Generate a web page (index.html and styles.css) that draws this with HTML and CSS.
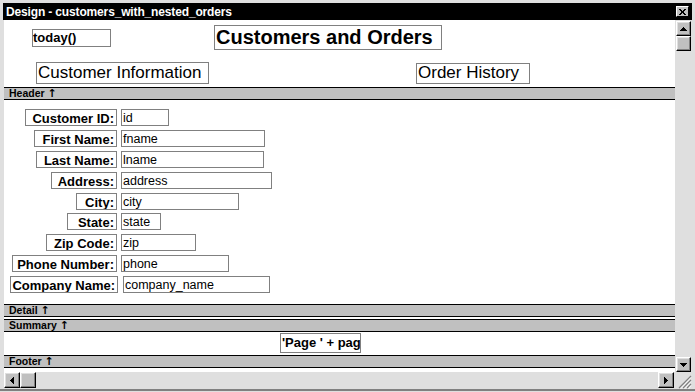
FILE: index.html
```html
<!DOCTYPE html>
<html>
<head>
<meta charset="utf-8">
<title>Design - customers_with_nested_orders</title>
<link rel="stylesheet" href="styles.css">
</head>
<body>
<div class="window">
  <div class="titlebar">
    <span class="title">Design - customers_with_nested_orders</span>
    <span class="close"><svg width="7" height="6" viewBox="0 0 7 6"><path d="M0 0h2v1h1v1h1V1h1V0h2v1H6v1H5v2h1v1h1v1H5V5H4V4H3v1H2v1H0V5h1V4h1V2H1V1H0z" fill="#000"/></svg></span>
  </div>
  <div class="client">
    <div class="canvas">
      <div class="area area-header">
        <div class="hrow hrow-1">
          <div class="ctl ctl-today">today()</div>
          <div class="ctl ctl-title">Customers and Orders</div>
        </div>
        <div class="hrow hrow-2">
          <div class="ctl ctl-custinfo">Customer Information</div>
          <div class="ctl ctl-orders">Order History</div>
        </div>
      </div>
      <div class="band">Header <span class="arrow">↑</span></div>
      <div class="area area-detail">
        <div class="fields">
          <div class="lbl w-custid">Customer ID:</div><div class="fld f-id">id</div>
          <div class="lbl w-fname">First Name:</div><div class="fld f-fname">fname</div>
          <div class="lbl w-lname">Last Name:</div><div class="fld f-lname">lname</div>
          <div class="lbl w-address">Address:</div><div class="fld f-address">address</div>
          <div class="lbl w-city">City:</div><div class="fld f-city">city</div>
          <div class="lbl w-state">State:</div><div class="fld f-state">state</div>
          <div class="lbl w-zip">Zip Code:</div><div class="fld f-zip">zip</div>
          <div class="lbl w-phone">Phone Number:</div><div class="fld f-phone">phone</div>
          <div class="lbl w-company">Company Name:</div><div class="fld f-company">company_name</div>
        </div>
      </div>
      <div class="band">Detail <span class="arrow">↑</span></div>
      <div class="area area-summary"></div>
      <div class="band">Summary <span class="arrow">↑</span></div>
      <div class="area area-footer">
        <div class="ctl ctl-page">'Page ' + pag</div>
      </div>
      <div class="band">Footer <span class="arrow">↑</span></div>
    </div>
    <div class="vscroll">
      <div class="btn btn-v"><svg width="7" height="4" viewBox="0 0 7 4"><path d="M3 0h1v1h1v1h1v1h1v1H0V3h1V2h1V1h1z" fill="#000"/></svg></div>
      <div class="btn btn-v"></div>
      <div class="btn btn-v btn-end"><svg width="7" height="4" viewBox="0 0 7 4"><path d="M0 0h7v1H6v1H5v1H4v1H3V3H2V2H1V1H0z" fill="#000"/></svg></div>
    </div>
    <div class="hscroll">
      <div class="btn btn-h"><svg width="4" height="7" viewBox="0 0 4 7"><path d="M3 0h1v7H3V6H2V5H1V4H0V3h1V2h1V1h1z" fill="#000"/></svg></div>
      <div class="btn btn-h"></div>
      <div class="btn btn-h btn-end"><svg width="4" height="7" viewBox="0 0 4 7"><path d="M0 0h1v1h1v1h1v1h1v1H3v1H2v1H1v1H0z" fill="#000"/></svg></div>
    </div>
    <div class="grip"><svg width="16" height="16" viewBox="0 0 16 16"><path d="M15 3L3 15M15 7L7 15M15 11L11 15" stroke="#808080" stroke-width="1.2"/><path d="M15 4.5L4.5 16M15 8.5L8.5 16M15 12.5L12.5 16" stroke="#fff" stroke-width="0.8"/></svg></div>
  </div>
</div>
</body>
</html>
```

FILE: styles.css
```css
* { box-sizing: border-box; }
html, body { margin: 0; padding: 0; }
body {
  width: 695px;
  height: 392px;
  overflow: hidden;
  background: #dfdfdf;
  font-family: "Liberation Sans", Arial, sans-serif;
  color: #000;
}
.window {
  width: 695px;
  height: 391px;
  padding: 3px 3px 0 3px;
  border-bottom: 2px solid #808080;
}
.titlebar {
  height: 17px;
  background: #000;
  display: flex;
  align-items: center;
  justify-content: space-between;
  padding: 0 3px 0 3px;
}
.title {
  color: #fff;
  font-weight: bold;
  font-size: 12px;
  letter-spacing: -0.15px;
  white-space: nowrap;
}
.close {
  width: 13px;
  height: 11px;
  background: #c0c0c0;
  border: 1px solid;
  border-color: #fff #000 #000 #fff;
  display: flex;
  align-items: center;
  justify-content: center;
}
.client {
  margin-left: 1px;
  display: grid;
  grid-template-columns: 671px 17px;
  grid-template-rows: 352px 17px;
}
.canvas {
  background: #fff;
  display: flex;
  flex-direction: column;
  overflow: hidden;
}
.area { flex-shrink: 0; }
.area-header { height: 67px; padding-top: 5px; }
.area-detail { height: 204px; padding-top: 9px; }
.area-summary { height: 2px; }
.area-footer { height: 23px; padding-top: 1px; }
.band {
  flex-shrink: 0;
  height: 13px;
  background: #c0c0c0;
  border-top: 1px solid #000;
  border-bottom: 1px solid #000;
  font-weight: bold;
  font-size: 10.5px;
  line-height: 11px;
  padding-left: 5px;
  white-space: nowrap;
  overflow: hidden;
}
.arrow {
  font-family: "DejaVu Sans", sans-serif;
  font-size: 11px;
  font-weight: bold;
  line-height: 11px;
}
.ctl {
  border: 1px solid #808080;
  white-space: nowrap;
  overflow: hidden;
  flex-shrink: 0;
}
.hrow { display: flex; }
.hrow-1 { height: 25px; align-items: center; }
.hrow-2 { margin-top: 12px; align-items: flex-start; }
.ctl-today {
  margin-left: 28px;
  width: 79px;
  height: 18px;
  font-weight: bold;
  font-size: 13px;
  line-height: 16px;
}
.ctl-title {
  margin-left: 103px;
  width: 228px;
  height: 25px;
  font-weight: bold;
  font-size: 20px;
  line-height: 23px;
  padding-left: 1px;
}
.ctl-custinfo {
  margin-left: 32px;
  width: 173px;
  height: 22px;
  font-size: 17px;
  line-height: 19px;
  padding-left: 1px;
}
.ctl-orders {
  margin-left: 207px;
  margin-top: 1px;
  width: 114px;
  height: 21px;
  font-size: 17px;
  line-height: 18px;
  padding-left: 1px;
}
.ctl-page {
  margin-left: 276px;
  width: 81px;
  height: 20px;
  font-weight: bold;
  font-size: 13px;
  line-height: 18px;
  padding-left: 1px;
}
.fields {
  display: grid;
  grid-template-columns: 113px auto;
  grid-auto-rows: 17px;
  column-gap: 4px;
  row-gap: 3.875px;
}
.lbl, .fld {
  height: 17px;
  border: 1px solid #808080;
  white-space: nowrap;
  overflow: hidden;
  font-size: 13px;
  line-height: 15px;
  padding-top: 1px;
}
.lbl {
  justify-self: end;
  text-align: right;
  font-weight: bold;
  padding-right: 2px;
}
.fld {
  justify-self: start;
  padding-left: 1px;
  font-size: 12.5px;
}
.w-custid { width: 92px; }
.w-fname { width: 83px; }
.w-lname { width: 81px; }
.w-address { width: 66px; }
.w-city { width: 41px; }
.w-state { width: 50px; }
.w-zip { width: 71px; }
.w-phone { width: 105px; }
.w-company { width: 108px; margin-right: -1px; }
.f-id { width: 48px; }
.f-fname { width: 144px; }
.f-lname { width: 143px; }
.f-address { width: 151px; }
.f-city { width: 118px; }
.f-state { width: 40px; }
.f-zip { width: 75px; }
.f-phone { width: 108px; }
.f-company { width: 147px; margin-left: 2px; }
.btn {
  background: #c0c0c0;
  border: 1px solid;
  border-color: #fff #000 #000 #fff;
  box-shadow: inset -1px -1px #808080, inset 1px 1px #dfdfdf;
  display: flex;
  align-items: center;
  justify-content: center;
  flex-shrink: 0;
}
.vscroll {
  background: #dfdfdf;
  display: flex;
  flex-direction: column;
  padding: 1px 1px 0 1px;
}
.btn-v { width: 15px; height: 15px; }
.hscroll {
  background: #dfdfdf;
  display: flex;
  padding: 0 1px 1px 0;
}
.btn-h { width: 16px; height: 16px; }
.btn-end { margin-left: auto; }
.vscroll .btn-end { margin-left: 0; margin-top: auto; }
.grip {
  background: #dfdfdf;
  display: flex;
  align-items: flex-end;
  justify-content: flex-end;
}
.grip svg { display: block; }
```
